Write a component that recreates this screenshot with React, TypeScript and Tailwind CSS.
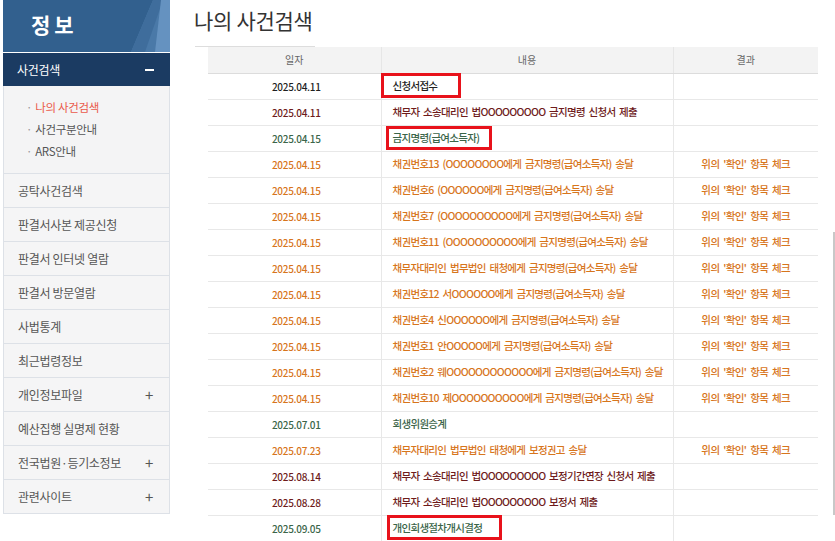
import { type JSX } from "react";

type Tone = "dark" | "maroon" | "green" | "orange";

type Row = {
    date: string;
    text: string;
    tone: Tone;
    result?: boolean;
    box?: string;
};

const toneClass: Record<Tone, string> = {
    dark: "text-[#1f1f1f]",
    maroon: "text-[#6e1b1b]",
    green: "text-[#3b6549]",
    orange: "text-[#d7751c]",
};

const rows: Row[] = [
    { date: "2025.04.11", text: "신청서접수", tone: "dark", box: "-left-[12px] -right-[24px] -top-[5px] -bottom-[5px]" },
    { date: "2025.04.11", text: "채무자 소송대리인 법OOOOOOOOO 금지명령 신청서 제출", tone: "maroon" },
    { date: "2025.04.15", text: "금지명령(급여소득자)", tone: "green", box: "-left-[7px] -right-[13px] -top-[4px] -bottom-[5px]" },
    { date: "2025.04.15", text: "채권번호13 (OOOOOOOO에게 금지명령(급여소득자) 송달", tone: "orange", result: true },
    { date: "2025.04.15", text: "채권번호6 (OOOOOO에게 금지명령(급여소득자) 송달", tone: "orange", result: true },
    { date: "2025.04.15", text: "채권번호7 (OOOOOOOOOO에게 금지명령(급여소득자) 송달", tone: "orange", result: true },
    { date: "2025.04.15", text: "채권번호11 (OOOOOOOOOO에게 금지명령(급여소득자) 송달", tone: "orange", result: true },
    { date: "2025.04.15", text: "채무자대리인 법무법인 태청에게 금지명령(급여소득자) 송달", tone: "orange", result: true },
    { date: "2025.04.15", text: "채권번호12 서OOOOOO에게 금지명령(급여소득자) 송달", tone: "orange", result: true },
    { date: "2025.04.15", text: "채권번호4 신OOOOOO에게 금지명령(급여소득자) 송달", tone: "orange", result: true },
    { date: "2025.04.15", text: "채권번호1 안OOOOO에게 금지명령(급여소득자) 송달", tone: "orange", result: true },
    { date: "2025.04.15", text: "채권번호2 웨OOOOOOOOOOOO에게 금지명령(급여소득자) 송달", tone: "orange", result: true },
    { date: "2025.04.15", text: "채권번호10 제OOOOOOOOOO에게 금지명령(급여소득자) 송달", tone: "orange", result: true },
    { date: "2025.07.01", text: "회생위원승계", tone: "green" },
    { date: "2025.07.23", text: "채무자대리인 법무법인 태청에게 보정권고 송달", tone: "orange", result: true },
    { date: "2025.08.14", text: "채무자 소송대리인 법OOOOOOOOO 보정기간연장 신청서 제출", tone: "maroon" },
    { date: "2025.08.28", text: "채무자 소송대리인 법OOOOOOOOO 보정서 제출", tone: "maroon" },
    { date: "2025.09.05", text: "개인회생절차개시결정", tone: "green", box: "-left-[6px] -right-[20px] -top-[5px] -bottom-[5px]" },
];

const menu: { label: string; plus?: boolean }[] = [
    { label: "공탁사건검색" },
    { label: "판결서사본 제공신청" },
    { label: "판결서 인터넷 열람" },
    { label: "판결서 방문열람" },
    { label: "사법통계" },
    { label: "최근법령정보" },
    { label: "개인정보파일", plus: true },
    { label: "예산집행 실명제 현황" },
    { label: "전국법원·등기소정보", plus: true },
    { label: "관련사이트", plus: true },
];

const subMenu = ["나의 사건검색", "사건구분안내", "ARS안내"];

function Sidebar(): JSX.Element {
    return (
        <aside className="ml-[3px] w-[167px] shrink-0">
            <div className="relative h-[52px] overflow-hidden bg-[#32608e]">
                <svg className="absolute inset-0" width="167" height="52" viewBox="0 0 167 52">
                    <polygon points="150,0 167,0 167,52 128,52" fill="#4a79a8" />
                    <polygon points="150,0 160,0 142,52 128,52" fill="#3f6d9c" />
                    <polygon points="158,0 167,0 167,52 152,52" fill="#6592c0" />
                </svg>
                <span className="relative block pl-[28px] pt-[9px] text-[21px] leading-[30px] font-bold tracking-[4px] text-white">
                    정보
                </span>
            </div>
            <div className="mt-px flex h-[33px] items-center justify-between bg-[#1b3b62] pl-[14px] pr-[16px] text-[12px] tracking-[-0.3px] text-white">
                <span>사건검색</span>
                <span className="block h-[2px] w-[9px] bg-white" />
            </div>
            <ul className="h-[87px] border-x border-[#dde1e7] bg-[#f4f4f5] pt-[10px] pl-[22px] text-[11.5px] leading-[22px] tracking-[-0.3px]">
                {subMenu.map((s, i) => (
                    <li key={s} className={i === 0 ? "text-[#ea5a4b]" : "text-[#555]"}>
                        <span className="mr-[3px] text-[#999]">·</span>
                        {s}
                    </li>
                ))}
            </ul>
            <ul className="border-x border-b border-[#dde1e7] bg-[#f5f5f6]">
                {menu.map((m) => (
                    <li
                        key={m.label}
                        className="flex h-[34px] items-center justify-between border-t border-[#dde1e7] pl-[14px] pr-[16px] text-[12px] tracking-[-0.3px] text-[#555]"
                    >
                        <span>{m.label}</span>
                        {m.plus && <span className="text-[15px] leading-none text-[#555]">+</span>}
                    </li>
                ))}
            </ul>
        </aside>
    );
}

function App(): JSX.Element {
    return (
        <div
            className="relative flex h-[541px] w-[835px] overflow-hidden bg-white"
            style={{ fontFamily: '"Noto Sans CJK KR", "Noto Sans", sans-serif' }}
        >
            <Sidebar />
            <main className="ml-[24px] flex-1">
                <h1 className="h-[47px] pt-[4px] text-[21px] leading-[32px] tracking-[-0.3px] text-[#333]">
                    나의 사건검색
                </h1>
                <div className="relative">
                    <div className="absolute -top-px left-px h-px w-[120px] bg-[#ddd]" />
                    <table className="ml-[14px] w-[610px] table-fixed border-collapse">
                        <colgroup>
                            <col className="w-[173px]" />
                            <col className="w-[292px]" />
                            <col className="w-[145px]" />
                        </colgroup>
                        <thead>
                            <tr className="h-[26px] bg-[#f3f3f3] text-[10px] font-normal text-[#666]">
                                <th className="border-b border-[#dcdcdc] font-normal">일자</th>
                                <th className="border-x border-b border-[#dcdcdc] border-x-[#e6e6e6] font-normal">내용</th>
                                <th className="border-b border-[#dcdcdc] font-normal">결과</th>
                            </tr>
                        </thead>
                        <tbody className="font-medium">
                            {rows.map((r, i) => (
                                <tr key={i} className="h-[26px]">
                                    <td className={`border-b border-[#e8e8e8] pl-[4px] text-center text-[10px] tracking-[-0.3px] ${toneClass[r.tone]}`}>
                                        {r.date}
                                    </td>
                                    <td className={`border-x border-b border-[#e8e8e8] pl-[11px] text-[10.5px] tracking-[-0.7px] [word-spacing:2px] whitespace-nowrap ${toneClass[r.tone]}`}>
                                        <span className="relative">
                                            {r.text}
                                            {r.box && (
                                                <span className={`absolute border-[3px] border-[#e8121b] ${r.box}`} />
                                            )}
                                        </span>
                                    </td>
                                    <td className="border-b border-[#e8e8e8] text-center text-[10.5px] tracking-[-0.6px] [word-spacing:2px] text-[#d7751c]">
                                        {r.result ? "위의 '확인' 항목 체크" : ""}
                                    </td>
                                </tr>
                            ))}
                        </tbody>
                    </table>
                </div>
            </main>
            <div className="absolute top-[232px] right-0 h-[283px] w-[2px] bg-[#c8c8c8]" />
        </div>
    );
}

export default App;
